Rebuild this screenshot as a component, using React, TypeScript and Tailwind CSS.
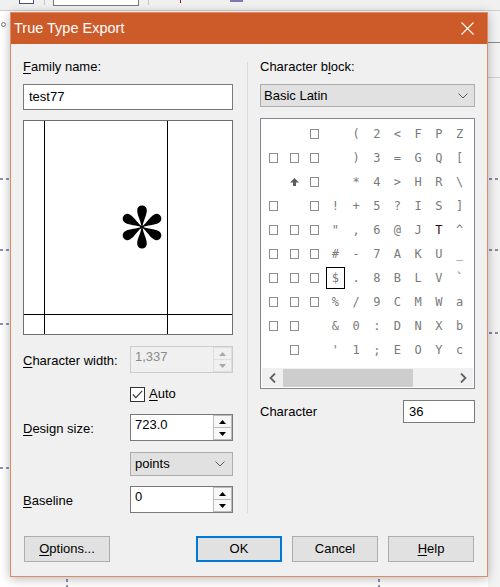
import React from "react";

const FONT = "font-['Liberation_Sans',Arial,sans-serif]";
const MONO = "font-['DejaVu_Sans_Mono',monospace]";

const U = ({ c }: { c: string }) => (
  <span className="underline decoration-1 underline-offset-[2px]">{c}</span>
);

function TriUp({ color = "#000" }: { color?: string }) {
  return (
    <svg width="7" height="4" viewBox="0 0 7 4">
      <path d="M0 4 L3.5 0 L7 4Z" fill={color} />
    </svg>
  );
}
function TriDown({ color = "#000" }: { color?: string }) {
  return (
    <svg width="7" height="4" viewBox="0 0 7 4">
      <path d="M0 0 L3.5 4 L7 0Z" fill={color} />
    </svg>
  );
}

function Chevron() {
  return (
    <svg width="10" height="6" viewBox="0 0 10 6">
      <polyline points="0.5,0.5 5,5 9.5,0.5" fill="none" stroke="#5a5a5a" strokeWidth="1" />
    </svg>
  );
}

function Spin({ value, disabled }: { value: string; disabled?: boolean }) {
  return (
    <div
      className={`flex h-[27px] w-[103px] border ${
        disabled ? "border-[#cccccc] bg-[#f0f0f0]" : "border-[#7a7a7a] bg-white"
      }`}
    >
      <div
        className={`flex-1 pl-[4px] pt-[1px] text-[13px] leading-[18px] ${
          disabled ? "text-[#8a8a8a]" : "text-black"
        }`}
      >
        {value}
      </div>
      <div className="flex w-[19px] flex-col">
        <div
          className={`flex h-[13px] items-center justify-center border ${
            disabled ? "border-[#dedede] bg-[#f0f0f0]" : "border-[#bcbcbc] bg-[#f7f7f7]"
          }`}
        >
          <TriUp color={disabled ? "#a8a8a8" : "#000"} />
        </div>
        <div
          className={`flex h-[12px] items-center justify-center border border-t-0 ${
            disabled ? "border-[#dedede] bg-[#f0f0f0]" : "border-[#bcbcbc] bg-[#f7f7f7]"
          }`}
        >
          <TriDown color={disabled ? "#a8a8a8" : "#000"} />
        </div>
      </div>
    </div>
  );
}

function Btn({ children, primary }: { children: React.ReactNode; primary?: boolean }) {
  return (
    <div
      className={`flex h-[26px] w-[86px] items-center justify-center bg-[#e1e1e1] text-[13px] text-black ${
        primary ? "border-2 border-[#0078d7]" : "border border-[#adadad]"
      }`}
    >
      {children}
    </div>
  );
}

function Petal({ r }: { r: number }) {
  return (
    <path
      transform={`rotate(${r})`}
      d="M-0.6,0 C-0.8,-6 -4.8,-11 -4.8,-16.8 A4.8,4.8 0 0 1 4.8,-16.8 C4.8,-11 0.8,-6 0.6,0 Z"
      fill="#000"
    />
  );
}

function Preview() {
  return (
    <div className="h-[215px] w-[210px] border border-[#6e6e6e] bg-white">
      <svg width="208" height="213" viewBox="0 0 208 213">
        <line x1="20.5" y1="0" x2="20.5" y2="213" stroke="#000" strokeWidth="1" />
        <line x1="143.5" y1="0" x2="143.5" y2="213" stroke="#000" strokeWidth="1" />
        <line x1="0" y1="193.5" x2="208" y2="193.5" stroke="#000" strokeWidth="1" />
        <g transform="translate(118 106)">
          {[0, 60, 120, 180, 240, 300].map((r) => (
            <Petal key={r} r={r} />
          ))}
        </g>
      </svg>
    </div>
  );
}

const ROWS: string[][] = [
  ["", "", "□", "", "(", "2", "<", "F", "P", "Z"],
  ["□", "□", "□", "", ")", "3", "=", "G", "Q", "["],
  ["", "⇧", "□", "", "*", "4", ">", "H", "R", "\\"],
  ["□", "", "□", "!", "+", "5", "?", "I", "S", "]"],
  ["□", "□", "□", '"', ",", "6", "@", "J", "T", "^"],
  ["□", "□", "□", "#", "-", "7", "A", "K", "U", "_"],
  ["□", "□", "□", "$", ".", "8", "B", "L", "V", "`"],
  ["□", "□", "□", "%", "/", "9", "C", "M", "W", "a"],
  ["□", "□", "", "&", "0", ":", "D", "N", "X", "b"],
  ["", "□", "", "'", "1", ";", "E", "O", "Y", "c"],
];

function Cell({ v }: { v: string }) {
  let inner: React.ReactNode = null;
  if (v === "□") {
    inner = <div className="h-[10px] w-[9px] border border-[#8c8c8c]" />;
  } else if (v === "⇧") {
    inner = (
      <svg width="9" height="8" viewBox="0 0 9 8">
        <polygon points="4.5,0 9,4.5 6,4.5 6,8 3,8 3,4.5 0,4.5" fill="#5e5e5e" />
      </svg>
    );
  } else if (v === "$") {
    inner = (
      <div className="flex h-[22px] w-[19px] items-center justify-center border border-black text-[#7a7a7a]">
        $
      </div>
    );
  } else if (v) {
    inner = <span className={v === "T" ? "text-[#2a0a10]" : "text-[#7a7a7a]"}>{v}</span>;
  }
  return <div className="flex h-[24px] items-center justify-center">{inner}</div>;
}

function CharGrid() {
  return (
    <div className="flex h-[271px] flex-col border border-[#828790] bg-white p-[1px]">
      <div className={`grid grid-cols-[repeat(10,20.7px)] pl-[1px] pt-[2px] text-[12px] ${MONO}`}>
        {ROWS.flat().map((v, i) => (
          <Cell key={i} v={v} />
        ))}
      </div>
      <div className="flex-1" />
      <div className="flex h-[19px] items-center bg-[#f0f0f0]">
        <div className="flex w-[20px] items-center justify-center">
          <svg width="7" height="10" viewBox="0 0 7 10">
            <polyline points="6,0.5 1.5,5 6,9.5" fill="none" stroke="#606060" strokeWidth="1.8" />
          </svg>
        </div>
        <div className="flex flex-1 items-center">
          <div className="ml-[1px] h-[18px] w-[130px] bg-[#cdcdcd]" />
        </div>
        <div className="flex w-[20px] items-center justify-center">
          <svg width="7" height="10" viewBox="0 0 7 10">
            <polyline points="1,0.5 5.5,5 1,9.5" fill="none" stroke="#606060" strokeWidth="1.8" />
          </svg>
        </div>
      </div>
    </div>
  );
}

function Dash({ x, y, horizontal = true }: { x: number; y: number; horizontal?: boolean }) {
  return (
    <div className="absolute" style={{ left: x, top: y }}>
      {horizontal ? (
        <svg width="12" height="2">
          <line x1="0" y1="1" x2="12" y2="1" stroke="#1c1c6a" strokeWidth="1" strokeDasharray="3 3" />
        </svg>
      ) : (
        <svg width="2" height="10">
          <line x1="1" y1="0" x2="1" y2="10" stroke="#1c1c6a" strokeWidth="1" strokeDasharray="3 3" />
        </svg>
      )}
    </div>
  );
}

export default function App() {
  return (
    <div className={`relative h-[587px] w-[500px] overflow-hidden bg-white ${FONT}`}>
      {/* backdrop */}
      <div className="absolute inset-x-0 top-0 h-[11px] border-b border-[#cfcfcf] bg-[#f0f0f0]">
        <div className="absolute left-[19px] top-[-5px] h-[9px] w-[15px] border border-[#4a4f80] bg-white" />
        <div className="absolute left-[44px] top-0 h-[5px] w-px bg-[#c4c4c4]" />
        <div className="absolute left-[53px] top-[-4px] h-[10px] w-[86px] border border-[#7a7a7a] bg-white" />
        <div className="absolute left-[148px] top-0 h-[5px] w-px bg-[#c4c4c4]" />
        <div className="absolute left-[180px] top-0 h-[3px] w-px bg-[#9a1030]" />
        <div className="absolute left-[230px] top-0 h-[2px] w-[13px] bg-[#7a7ab0]" />
      </div>
      <div className="absolute right-0 top-[11px] h-[576px] w-[12px] bg-[#f3f3f3]">
        <div className="absolute left-0 top-[31px] h-px w-full bg-[#8a8a8a]" />
        <div className="absolute left-0 top-[66px] h-px w-full bg-[#d0d0d0]" />
      </div>
      <div className="absolute left-[1px] top-[22px] h-[5px] w-[5px] rounded-full border border-[#777]" />
      <Dash x={0} y={178} />
      <Dash x={0} y={249} />
      <Dash x={0} y={323} />
      <Dash x={0} y={467} />
      <Dash x={489} y={178} />
      <Dash x={489} y={249} />
      <Dash x={489} y={332} />
      <Dash x={66} y={579} horizontal={false} />
      <Dash x={378} y={579} horizontal={false} />

      {/* dialog */}
      <div className="absolute left-[10px] top-[12px] flex h-[565px] w-[478px] flex-col border border-[#de8c68] bg-[#f0f0f0] shadow-[0_2px_10px_rgba(0,0,0,0.28)]">
        <div className="flex h-[31px] items-center justify-between bg-[#cd5b2a] pl-[3px] pr-[13px]">
          <span className="text-[14.5px] text-white">True Type Export</span>
          <svg width="13" height="13" viewBox="0 0 13 13">
            <line x1="0.5" y1="0.5" x2="12.5" y2="12.5" stroke="#fff" strokeWidth="1.1" />
            <line x1="12.5" y1="0.5" x2="0.5" y2="12.5" stroke="#fff" strokeWidth="1.1" />
          </svg>
        </div>

        <div className="flex flex-1 flex-col px-[12px] pt-[15px] text-[13px] text-black">
          <div className="flex">
            {/* left column */}
            <div className="flex w-[210px] flex-col">
              <div className="h-[16px] leading-[16px]">
                <U c="F" />amily name:
              </div>
              <div className="mt-[9px] h-[26px] border border-[#7a7a7a] bg-white pl-[5px] leading-[24px]">
                test77
              </div>
              <div className="mt-[10px]">
                <Preview />
              </div>
              <div className="mt-[11px] flex h-[27px] items-center justify-between">
                <span className="pt-[2px]">
                  <U c="C" />haracter width:
                </span>
                <Spin value="1,337" disabled />
              </div>
              <div className="mt-[13px] flex h-[16px] items-center pl-[107px]">
                <div className="flex h-[15px] w-[15px] items-center justify-center border border-[#333] bg-white">
                  <svg width="11" height="9" viewBox="0 0 11 9">
                    <polyline points="0.8,4.5 3.8,7.6 10.2,0.8" fill="none" stroke="#333" strokeWidth="1.1" />
                  </svg>
                </div>
                <span className="ml-[4px]">
                  <U c="A" />uto
                </span>
              </div>
              <div className="mt-[12px] flex h-[27px] items-center justify-between">
                <span className="pt-[2px]">
                  <U c="D" />esign size:
                </span>
                <Spin value="723.0" />
              </div>
              <div className="ml-[107px] mt-[11px] flex h-[24px] w-[103px] items-center justify-between border border-[#adadad] bg-[#e1e1e1] pl-[4px] pr-[7px]">
                <span>points</span>
                <Chevron />
              </div>
              <div className="mt-[10px] flex h-[27px] items-center justify-between">
                <span className="pt-[2px]">
                  <U c="B" />aseline
                </span>
                <Spin value="0" />
              </div>
            </div>

            {/* divider */}
            <div className="ml-[14px] mt-[3px] w-px bg-[#dadada]" />

            {/* right column */}
            <div className="ml-[12px] flex w-[215px] flex-col">
              <div className="h-[16px] leading-[16px]">
                Character b<U c="l" />ock:
              </div>
              <div className="mt-[9px] flex h-[23px] items-center justify-between border border-[#adadad] bg-[#e1e1e1] pl-[3px] pr-[6px]">
                <span>Basic Latin</span>
                <Chevron />
              </div>
              <div className="mt-[11px]">
                <CharGrid />
              </div>
              <div className="mt-[11px] flex items-center justify-between">
                <span>Character</span>
                <div className="h-[23px] w-[72px] border border-[#7a7a7a] bg-white pl-[5px] leading-[21px]">
                  36
                </div>
              </div>
            </div>
          </div>

          <div className="mb-[14px] mt-auto flex justify-between px-[1px]">
            <Btn>
              <span>
                <U c="O" />ptions...
              </span>
            </Btn>
            <div className="flex gap-[10px]">
              <Btn primary>OK</Btn>
              <Btn>Cancel</Btn>
              <Btn>
                <span>
                  <U c="H" />elp
                </span>
              </Btn>
            </div>
          </div>
        </div>
      </div>
    </div>
  );
}
